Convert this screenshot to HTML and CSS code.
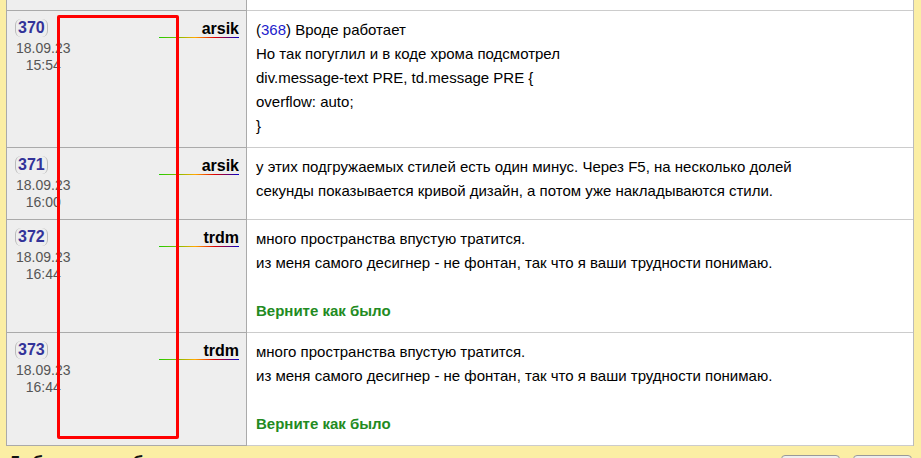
FILE: index.html
```html
<!DOCTYPE html>
<html>
<head>
  <title>Форум - тема</title>
  <meta charset="utf-8">
  <link rel="stylesheet" href="styles.css">
</head>
<body>
  <div class="thread">
    <!-- tail of the previous message, scrolled out of view -->
    <div class="post partial">
      <div class="author-cell"></div>
      <div class="message"></div>
    </div>

    <div class="post">
      <div class="author-cell">
        <div class="head">
          <span class="num">370</span>
          <span class="nick">arsik</span>
        </div>
        <div class="when"><span>18.09.23</span><span>15:54</span></div>
      </div>
      <div class="message">
        (<a href="#" class="ref">368</a>) Вроде работает<br>
        Но так погуглил и в коде хрома подсмотрел<br>
        div.message-text PRE, td.message PRE {<br>
        overflow: auto;<br>
        }
      </div>
    </div>

    <div class="post">
      <div class="author-cell">
        <div class="head">
          <span class="num">371</span>
          <span class="nick">arsik</span>
        </div>
        <div class="when"><span>18.09.23</span><span>16:00</span></div>
      </div>
      <div class="message">
        у этих подгружаемых стилей есть один минус. Через F5, на несколько долей<br>
        секунды показывается кривой дизайн, а потом уже накладываются стили.
      </div>
    </div>

    <div class="post">
      <div class="author-cell">
        <div class="head">
          <span class="num">372</span>
          <span class="nick">trdm</span>
        </div>
        <div class="when"><span>18.09.23</span><span>16:44</span></div>
      </div>
      <div class="message">
        много пространства впустую тратится.<br>
        из меня самого десигнер - не фонтан, так что я ваши трудности понимаю.
        <div class="sign">Верните как было</div>
      </div>
    </div>

    <div class="post">
      <div class="author-cell">
        <div class="head">
          <span class="num">373</span>
          <span class="nick">trdm</span>
        </div>
        <div class="when"><span>18.09.23</span><span>16:44</span></div>
      </div>
      <div class="message">
        много пространства впустую тратится.<br>
        из меня самого десигнер - не фонтан, так что я ваши трудности понимаю.
        <div class="sign">Верните как было</div>
      </div>
    </div>
  </div>

  <div class="footer">
    <h3 class="reply-title">Добавить сообщение</h3>
    <div class="buttons">
      <button class="btn">Ответ</button>
      <button class="btn">Цитата</button>
    </div>
  </div>

  <!-- selection frame drawn over the author column -->
  <div class="highlight"></div>
</body>
</html>
```

FILE: styles.css
```css
body {
  margin: 0;
  font-family: "Liberation Sans", Arial, sans-serif;
  font-size: 14px;
  background-color: #fbeea4;
  overflow: hidden;
  height: 458px;
}
.thread {
  margin-left: 6px;
  width: 906px;
  border-left: 1px solid #aaa;
  border-right: 1px solid #bbb;
}
.post {
  display: grid;
  grid-template-columns: 240px 1fr;
}
.author-cell {
  background-color: #eeeeee;
  border-right: 1px solid #aaa;
  border-bottom: 1px solid #aaa;
  padding: 8px 7px 8px 8px;
}
.message {
  background-color: white;
  border-bottom: 1px solid #ccc;
  padding: 7px 9px 9px 9px;
  font-size: 15px;
  line-height: 24px;
  color: #000;
}
.partial .author-cell,
.partial .message {
  height: 10px;
  padding: 0;
}
.head {
  display: flex;
  justify-content: space-between;
  align-items: flex-start;
}
.num {
  display: inline-block;
  height: 18px;
  line-height: 18px;
  padding: 0 2px;
  border-left: 1px solid #bbb;
  border-right: 1px solid #bbb;
  border-radius: 6px;
  color: #333399;
  font-weight: bold;
  font-size: 16px;
}
.nick {
  width: 80px;
  text-align: right;
  font-weight: bold;
  font-size: 16px;
  line-height: 18px;
  padding-top: 1px;
  color: #000;
  background-image: linear-gradient(to right, #22cc00, #88bb00 25%, #ffaa00 45%, #dd0000 70%, #0000cc);
  background-size: 100% 1px;
  background-repeat: no-repeat;
  background-position: bottom;
}
.when {
  display: flex;
  flex-direction: column;
  align-items: center;
  width: fit-content;
  margin-top: 2px;
  padding-left: 1px;
  font-size: 14px;
  line-height: 17px;
  color: #555;
}
.ref {
  color: #2222cc;
  text-decoration: none;
}
.sign {
  margin-top: 24px;
  color: #228b22;
  font-weight: bold;
}
.footer {
  display: flex;
  justify-content: space-between;
  align-items: flex-start;
  margin-top: 7px;
  width: 912px;
}
.reply-title {
  margin: 0 0 0 8px;
  font-size: 18px;
  color: #111;
}
.buttons {
  display: flex;
  gap: 13px;
  margin-top: 2px;
}
.btn {
  width: 59px;
  height: 24px;
  border: 1px solid #999;
  border-radius: 4px;
  background-color: #eeeeee;
  font-family: "Liberation Sans", Arial, sans-serif;
  font-size: 13px;
}
.highlight {
  position: absolute;
  left: 57px;
  top: 15px;
  width: 116px;
  height: 418px;
  border: 3px solid red;
  border-radius: 2px;
}
```
